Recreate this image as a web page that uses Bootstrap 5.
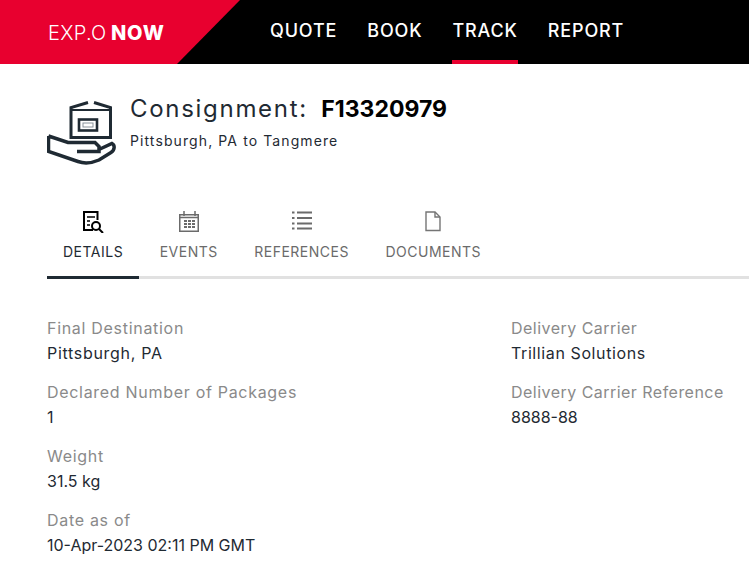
<!DOCTYPE html>
<html lang="en">
<head>
    <meta charset="UTF-8">
    <meta name="viewport" content="width=device-width, initial-scale=1.0">
    <title>Exp.o Now - Track</title>
    <link href="https://cdn.jsdelivr.net/npm/bootstrap@5.3.0/dist/css/bootstrap.min.css" rel="stylesheet">
    <style>
        body {
            font-family: 'Inter', 'Open Sans', sans-serif;
            color: #1f2a33;
            overflow: hidden;
        }
        .top-bar { height: 64px; background: #000; }
        .brand-block {
            width: 240px;
            padding: 2px 0 0 48px;
            background: #e8002f;
            clip-path: polygon(0 0, 100% 0, 177px 100%, 0 100%);
            color: #fff;
            font-size: 20px;
            letter-spacing: .3px;
            word-spacing: -1.5px;
            font-weight: 300;
        }
        .brand-block strong { font-weight: 800; letter-spacing: .9px; }
        .top-links { margin-left: 15px; }
        .top-links a {
            color: #fff;
            font-size: 18px;
            font-weight: 500;
            letter-spacing: .85px;
            text-decoration: none;
            padding: 0 15px;
            height: 64px;
            line-height: 62px;
            position: relative;
        }
        .top-links a.active::after {
            content: "";
            position: absolute;
            left: 15px;
            right: 15px;
            bottom: 0;
            height: 4px;
            background: #e8002f;
        }
        .head-block { padding: 29px 0 0 47px; height: 139px; }
        .box-icon { width: 70px; height: 66px; margin-top: 7px; margin-right: 13px; flex: none; }
        .head-title { font-size: 24px; line-height: 32px; margin: 0; font-weight: 400; letter-spacing: 1.7px; white-space: nowrap; }
        .head-title strong { font-size: 23px; font-weight: 700; color: #000; margin-left: 5px; letter-spacing: 0; }
        .head-sub { font-size: 14px; line-height: 20px; margin-top: 6px; letter-spacing: 1.1px; }
        .tab-strip { margin-left: 47px; border-bottom: 3px solid #e1e1e1; height: 76px; gap: 4.5px; }
        .tab-item {
            display: flex;
            flex-direction: column;
            align-items: center;
            padding: 0 16px;
            height: 76px;
            color: #6b6b6b;
            font-size: 14px;
            text-decoration: none;
            letter-spacing: .5px;
            border-bottom: 3px solid transparent;
        }
        .tab-item svg { height: 24px; width: 24px; margin-top: 6px; margin-bottom: 8px; }
        .tab-item.active { color: #1f2a33; border-bottom-color: #1f2a33; }
        .facts { padding: 37px 0 0 47px; }
        .facts-col { width: 464px; flex: none; }
        .facts-col-end { min-width: 0; flex: 1 1 0; white-space: nowrap; }
        .fact-item { height: 64px; font-size: 16px; line-height: 25px; letter-spacing: .7px; }
        .fact-name { color: #8a8a8a; }
        .facts-col-end .fact-name { letter-spacing: .47px; }
        .facts-col-end .fact-item { letter-spacing: .6px; }
        .fact-item .fact-num { letter-spacing: 0; }
    </style>
</head>
<body>
    <nav class="top-bar d-flex">
        <div class="brand-block d-flex align-items-center"><span>EXP.O <strong>NOW</strong></span></div>
        <div class="top-links d-flex">
            <a href="#">QUOTE</a>
            <a href="#">BOOK</a>
            <a href="#" class="active">TRACK</a>
            <a href="#">REPORT</a>
        </div>
    </nav>

    <div class="head-block d-flex">
        <svg class="box-icon" viewBox="47 100 70 66" fill="none" stroke="#1f2a33" stroke-width="3">
            <path d="M88 102.5L71 107.5V137.5H110.5V107.5L94 102.5"/>
            <path d="M71 110H110.5" stroke-width="2"/>
            <rect x="79" y="119.5" width="18" height="11" stroke-width="2.6"/>
            <rect x="83" y="123" width="10" height="4" stroke="#8a939b" stroke-width="1"/>
            <path d="M48.5 136V151.5L78 161.5C85 164 92 163 99 160L111 152.5C115 150 115 145 112 143.5L100 149M48.5 136L68 142.5H95L99 146.5V151.5H77" stroke-width="3.5"/>
        </svg>
        <div>
            <h1 class="head-title">Consignment: <strong>F13320979</strong></h1>
            <div class="head-sub">Pittsburgh, PA to Tangmere</div>
        </div>
    </div>

    <div class="tab-strip d-flex">
        <a href="#" class="tab-item active">
            <svg viewBox="0 0 24 24" fill="none" stroke="#000" stroke-width="2">
                <path d="M12 21H3V3H16.5V11"/>
                <path d="M6 8H14M6 12H9M6 16H9" stroke-width="1.6"/>
                <circle cx="15" cy="17" r="4"/>
                <path d="M18 20L22 24"/>
            </svg>
            DETAILS
        </a>
        <a href="#" class="tab-item">
            <svg viewBox="0 0 24 24" fill="none" stroke="#6b6b6b" stroke-width="1.5">
                <rect x="2.75" y="5.75" width="18.5" height="16.5"/>
                <path d="M7 2V7M18 2V7M2.75 8.5H21.25"/>
                <path d="M7 12H18M7 15H18M7 18H18" stroke-width="2" stroke-dasharray="3 1"/>
            </svg>
            EVENTS
        </a>
        <a href="#" class="tab-item">
            <svg viewBox="0 0 24 24" fill="none" stroke="#6b6b6b" stroke-width="2">
                <path d="M7 3.5H22M7 9H22M7 14.5H22M7 19.5H22"/>
                <path d="M2 3.5H4.5M2 9H4.5M2 14.5H4.5M2 19.5H4.5"/>
            </svg>
            REFERENCES
        </a>
        <a href="#" class="tab-item">
            <svg viewBox="0 0 24 24" fill="none" stroke="#757575" stroke-width="1.4">
                <path d="M5 3H14L19 8V21.5H5Z"/>
                <path d="M14 3V8H19"/>
            </svg>
            DOCUMENTS
        </a>
    </div>

    <div class="facts d-flex">
        <div class="facts-col">
            <div class="fact-item"><div class="fact-name">Final Destination</div><div>Pittsburgh, PA</div></div>
            <div class="fact-item"><div class="fact-name">Declared Number of Packages</div><div class="fact-num">1</div></div>
            <div class="fact-item"><div class="fact-name">Weight</div><div class="fact-num">31.5 kg</div></div>
            <div class="fact-item"><div class="fact-name">Date as of</div><div class="fact-num">10-Apr-2023 02:11 PM GMT</div></div>
        </div>
        <div class="facts-col-end">
            <div class="fact-item"><div class="fact-name">Delivery Carrier</div><div>Trillian Solutions</div></div>
            <div class="fact-item"><div class="fact-name">Delivery Carrier Reference</div><div class="fact-num">8888-88</div></div>
        </div>
    </div>

    <script src="https://cdn.jsdelivr.net/npm/bootstrap@5.3.0/dist/js/bootstrap.bundle.min.js"></script>
</body>
</html>
